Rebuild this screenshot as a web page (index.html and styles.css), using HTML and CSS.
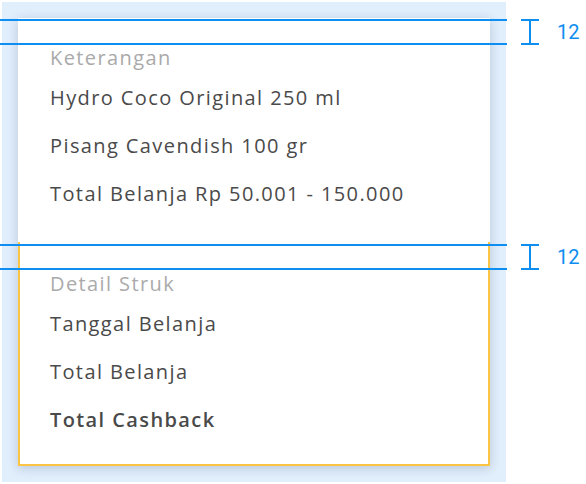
FILE: index.html
```html
<!DOCTYPE html>
<html lang="id">
<head>
<meta charset="utf-8">
<title>Spec</title>
<link rel="stylesheet" href="styles.css">
</head>
<body>
<div class="stage">
  <div class="panel">
    <div class="card">
      <section class="section">
        <div class="label">Keterangan</div>
        <div class="item">Hydro Coco Original 250 ml</div>
        <div class="item">Pisang Cavendish 100 gr</div>
        <div class="item">Total Belanja Rp 50.001 - 150.000</div>
      </section>
      <section class="section section-highlight">
        <div class="label">Detail Struk</div>
        <div class="item">Tanggal Belanja</div>
        <div class="item">Total Belanja</div>
        <div class="item item-strong">Total Cashback</div>
      </section>
    </div>
  </div>

  <div class="spec spec-top">
    <div class="spec-line spec-line-a"></div>
    <div class="spec-line spec-line-b"></div>
    <div class="spec-marker"></div>
    <div class="spec-value">12</div>
  </div>
  <div class="spec spec-bottom">
    <div class="spec-line spec-line-a"></div>
    <div class="spec-line spec-line-b"></div>
    <div class="spec-marker"></div>
    <div class="spec-value">12</div>
  </div>
</div>
</body>
</html>
```

FILE: styles.css
```css
* { box-sizing: border-box; }

html, body {
  margin: 0;
  padding: 0;
  background: #ffffff;
}

body {
  font-family: "Open Sans", Roboto, "Liberation Sans", sans-serif;
}

.stage {
  position: relative;
  width: 586px;
  height: 484px;
}

.panel {
  margin: 2px;
  width: 504px;
  height: 480px;
  padding: 16px;
  background: #e1eefc;
}

.card {
  width: 472px;
  background: #ffffff;
  box-shadow: 0 2px 10px rgba(40, 60, 90, 0.22);
}

.section {
  padding: 24px 32px 24px 32px;
}

.section-highlight {
  border: 2px solid #fbc443;
  border-top: 0;
  padding: 26px 30px 20px 30px;
}

.label {
  font-size: 20px;
  line-height: 32px;
  color: #aaaaaa;
  letter-spacing: 1.4px;
}

.item {
  font-size: 20px;
  line-height: 48px;
  color: #4a4a4a;
  letter-spacing: 1.4px;
}

.item-strong {
  font-weight: 600;
}

/* spec annotations overlay */
.spec {
  position: absolute;
  left: 0;
  width: 586px;
  height: 26px;
}

.spec-top { top: 17px; }
.spec-bottom { top: 242px; }

.spec-line {
  position: absolute;
  left: 0;
  width: 507px;
  height: 2px;
  background: #0d8ef0;
}

.spec-line-a { top: 0; }
.spec-line-b { top: 24px; }

.spec-marker {
  position: absolute;
  left: 521px;
  top: 0;
  width: 18px;
  height: 26px;
  border-top: 2px solid #0d8ef0;
  border-bottom: 2px solid #0d8ef0;
}

.spec-marker::before {
  content: "";
  position: absolute;
  left: 8px;
  top: 0;
  width: 2px;
  height: 22px;
  background: #0d8ef0;
}

.spec-value {
  position: absolute;
  left: 557px;
  top: 1px;
  font-family: Roboto, sans-serif;
  font-size: 20px;
  line-height: 24px;
  color: #0d8ef0;
}
```
